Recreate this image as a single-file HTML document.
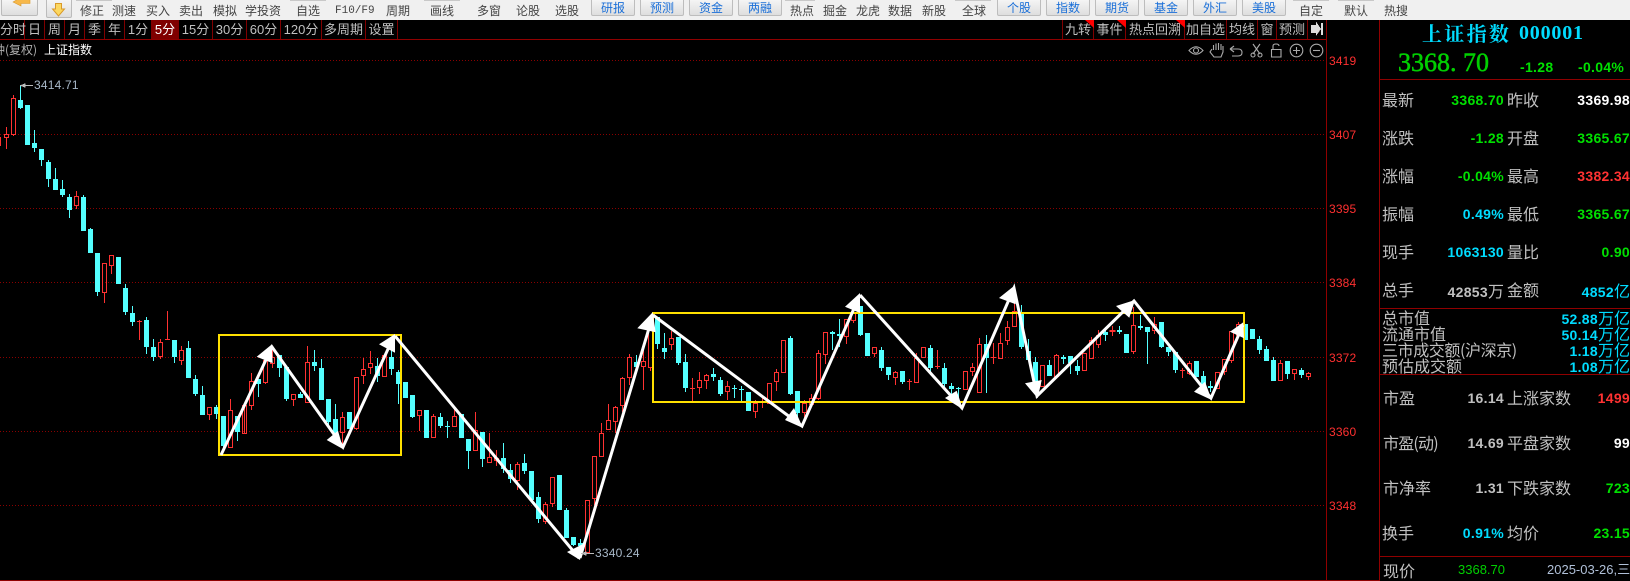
<!DOCTYPE html>
<html><head><meta charset="utf-8"><style>
html,body{margin:0;padding:0;background:#000}
#p{position:relative;width:1630px;height:581px;overflow:hidden;background:#000;font-family:"Liberation Sans","WenQuanYi Zen Hei","Noto Sans CJK SC",sans-serif}
#p div,#p span.a{position:absolute;white-space:nowrap}
.z{font-family:"WenQuanYi Zen Hei","Noto Sans CJK SC",sans-serif}
#tb{left:0;top:0;width:1630px;height:20px;background:#f0f0f0}
.t{top:4px;font-size:12px;line-height:14px;color:#444;font-family:"WenQuanYi Zen Hei","Noto Sans CJK SC",sans-serif}
.b{top:-2px;height:18px;box-sizing:border-box;border:1px solid #bdbdbd;border-radius:2px;background:linear-gradient(#f6f6f6,#dedede);color:#1a6fd8;font-size:12px;line-height:18px;text-align:center;font-family:"WenQuanYi Zen Hei","Noto Sans CJK SC",sans-serif}
.g{top:0;height:1px;background:#c8c8c8}
.tab{top:20px;height:19px;line-height:20px;box-sizing:border-box;border-right:1px solid #800000;color:#c0c0c0;font-size:13px;text-align:center;font-family:"Liberation Sans","WenQuanYi Zen Hei",sans-serif}
.ax{left:1329px;color:#ff3030;font-size:12px;line-height:14px;letter-spacing:.15px}
.l{font-size:16px;line-height:16px;color:#c0c0c0;font-family:"WenQuanYi Zen Hei","Noto Sans CJK SC",sans-serif}
.n{font-size:14px;font-weight:bold;line-height:16px;text-align:right;letter-spacing:.3px}
.u{font-size:16px;font-weight:normal;letter-spacing:0;font-family:"WenQuanYi Zen Hei","Noto Sans CJK SC",sans-serif}
.gr{color:#00e000}.re{color:#ff3232}.cy{color:#00dcff}.wh{color:#fff}.gy{color:#c0c0c0}
.c2{right:126px}.c4{right:0}
</style></head><body><div id="p">

<div id="tb"></div>
<div style="left:1px;top:-2px;width:37px;height:18px;box-sizing:border-box;border:1px solid #bbb;border-radius:2px;background:linear-gradient(#f6f6f6,#dedede)"></div>
<div style="left:46px;top:-2px;width:26px;height:20px;box-sizing:border-box;border:1px solid #bbb;border-radius:2px;background:linear-gradient(#f6f6f6,#dedede)"></div>
<svg style="position:absolute;left:0;top:0" width="80" height="20"><path d="M13 2L20 -2H30V3.500H21V6z" fill="#f7b84a" stroke="#d89a30" stroke-width=".6"/><path d="M55.500 3.500H61.500V9H64.500L58.500 16L52.500 9H55.500z" fill="#fcd860" stroke="#d99a2a" stroke-width="1"/></svg>
<div class="t" style="left:80px">修正</div>
<div class="t" style="left:112px">测速</div>
<div class="t" style="left:146px">买入</div>
<div class="t" style="left:179px">卖出</div>
<div class="t" style="left:213px">模拟</div>
<div class="t" style="left:245px">学投资</div>
<div class="t" style="left:296px">自选</div>
<div class="t" style="left:335px;font-family:'Liberation Mono',monospace;font-size:11px">F10/F9</div>
<div class="t" style="left:386px">周期</div>
<div class="t" style="left:430px">画线</div>
<div class="t" style="left:477px">多窗</div>
<div class="t" style="left:516px">论股</div>
<div class="t" style="left:555px">选股</div>
<div class="b" style="left:591px;width:44px">研报</div>
<div class="b" style="left:640px;width:44px">预测</div>
<div class="b" style="left:689px;width:44px">资金</div>
<div class="b" style="left:738px;width:44px">两融</div>
<div class="t" style="left:790px">热点</div>
<div class="t" style="left:823px">掘金</div>
<div class="t" style="left:856px">龙虎</div>
<div class="t" style="left:888px">数据</div>
<div class="t" style="left:922px">新股</div>
<div class="t" style="left:962px">全球</div>
<div class="b" style="left:997px;width:44px">个股</div>
<div class="b" style="left:1046px;width:44px">指数</div>
<div class="b" style="left:1095px;width:44px">期货</div>
<div class="b" style="left:1144px;width:44px">基金</div>
<div class="b" style="left:1193px;width:44px">外汇</div>
<div class="b" style="left:1242px;width:44px">美股</div>
<div class="t" style="left:1299px">自定</div>
<div class="t" style="left:1344px">默认</div>
<div class="t" style="left:1384px">热搜</div>
<div class="g" style="left:76px;width:36px"></div><div class="g" style="left:290px;width:36px"></div><div class="g" style="left:424px;width:36px"></div><div class="g" style="left:785px;width:30px"></div><div class="g" style="left:955px;width:36px"></div><div class="g" style="left:1293px;width:36px"></div><div class="g" style="left:1338px;width:36px"></div>

<div class="tab" style="left:0;width:25px;text-align:right;padding-right:1px">分时</div>
<div class="tab" style="left:25px;width:20px">日</div>
<div class="tab" style="left:45px;width:20px">周</div>
<div class="tab" style="left:65px;width:20px">月</div>
<div class="tab" style="left:85px;width:20px">季</div>
<div class="tab" style="left:105px;width:20px">年</div>
<div class="tab" style="left:125px;width:27px">1分</div>
<div class="tab" style="left:152px;width:27px;background:#800000;color:#fff">5分</div>
<div class="tab" style="left:179px;width:34px">15分</div>
<div class="tab" style="left:213px;width:34px">30分</div>
<div class="tab" style="left:247px;width:34px">60分</div>
<div class="tab" style="left:281px;width:41px">120分</div>
<div class="tab" style="left:322px;width:44px">多周期</div>
<div class="tab" style="left:366px;width:32px">设置</div>

<div class="tab" style="left:1062px;width:32px;border-left:1px solid #800000">九转</div>
<div class="tab" style="left:1094px;width:32px">事件</div>
<div class="tab" style="left:1126px;width:59px">热点回溯</div>
<div class="tab" style="left:1185px;width:42px">加自选</div>
<div class="tab" style="left:1227px;width:31px">均线</div>
<div class="tab" style="left:1258px;width:19px">窗</div>
<div class="tab" style="left:1277px;width:31px">预测</div>
<div class="z" style="left:-7px;top:43px;font-size:12px;line-height:14px;color:#b0b0b0">钟(复权)</div>
<div class="z" style="left:44px;top:43px;font-size:12px;line-height:14px;color:#fff">上证指数</div>

<svg style="position:absolute;left:0;top:0" width="1630" height="581" shape-rendering="crispEdges">
<path d="M0 39.500H1326M1379 79.500H1630M1379 308.500H1630M1379 374.500H1630M1379 556.500H1630M0 580.500H1379M1326.500 20V581M1379.500 20V581" stroke="#900000" fill="none"/>
<path d="M0 60.500H1326M0 134.500H1326M0 208.500H1326M0 282.500H1326M0 357.500H1326M0 431.500H1326M0 505.500H1326" stroke="#8a0000" stroke-dasharray="1 2" fill="none"/>
<path d="M1085 20h9v8zM1117 20h9v8zM1176 20h9v8z" fill="#f00" shape-rendering="auto"/>

<path fill="none" stroke="#54ffff" d="M20.500 85V109M27.500 105V145M34.500 130V152M41.500 149V166M48.500 160V187M55.500 168V190M62.500 180V197M69.500 194V218M83.500 195V231M90.500 228V253M97.500 253V296M118.500 257V284M125.500 284V315M132.500 306V326M146.500 317V354M153.500 339V361M174.500 340V363M188.500 341V378M195.500 375V396M202.500 386V415M216.500 405V419M223.500 416V450M237.500 416V441M258.500 379V397M279.500 355V377M286.500 367V401M300.500 392V398M314.500 350V371M321.500 359V400M328.500 399V427M335.500 404V440M349.500 412V429M377.500 358V382M391.500 350V375M398.500 370V404M405.500 382V398M412.500 395V418M426.500 410V438M440.500 413V428M447.500 421V438M461.500 414V438M468.500 439V469M482.500 432V467M503.500 443V473M510.500 464V483M524.500 454V474M531.500 471V500M538.500 492V523M559.500 475V510M566.500 508V538M573.500 537V546M580.500 539V553M636.500 355V367M657.500 317V349M664.500 333V359M678.500 337V365M685.500 354V392M713.500 368V381M720.500 377V396M734.500 385V398M741.500 386V402M748.500 392V411M790.500 336V395M797.500 391V420M832.500 331V350M839.500 319V347M860.500 306V336M867.500 333V356M881.500 347V371M888.500 367V380M902.500 371V384M930.500 345V372M944.500 363V387M951.500 383V395M958.500 387V402M986.500 335V393M1021.500 305V349M1028.500 339V360M1035.500 357V382M1049.500 360V376M1063.500 355V364M1070.500 356V374M1077.500 360V375M1105.500 327V341M1119.500 326V334M1126.500 334V353M1140.500 315V330M1147.500 327V364M1161.500 322V348M1168.500 347V356M1175.500 352V373M1196.500 361V377M1203.500 371V390M1210.500 381V392M1245.500 324V340M1252.500 329V339M1259.500 336V354M1266.500 346V361M1273.500 357V381M1287.500 361V379M1301.500 368V378"/>
<path fill="none" stroke="#54ffff" stroke-width="5" d="M20.500 100V108M27.500 105V145M34.500 143V148M41.500 149V160M48.500 162V179M55.500 179V190M62.500 189V195M69.500 197V210M83.500 197V231M90.500 229V253M97.500 253V292M118.500 257V284M125.500 288V312M132.500 313V322M146.500 320V347M153.500 347V357M174.500 340V357M188.500 348V378M195.500 379V394M202.500 395V415M216.500 407V414M223.500 416V446M237.500 416V432M258.500 379V384M279.500 355V368M286.500 367V399M300.500 394V398M314.500 362V366M321.500 368V400M328.500 399V422M335.500 419V435M349.500 412V429M377.500 366V376M391.500 357V369M398.500 372V384M405.500 382V398M412.500 395V417M426.500 410V438M440.500 417V426M447.500 426V427M461.500 414V438M468.500 439V451M482.500 432V459M503.500 458V469M510.500 470V479M524.500 463V471M531.500 471V500M538.500 497V519M559.500 475V510M566.500 510V538M573.500 537V545M580.500 543V546M636.500 362V367M657.500 317V344M664.500 348V352M678.500 337V363M685.500 362V388M713.500 374V377M720.500 380V394M734.500 388V389M741.500 389V390M748.500 392V411M790.500 338V394M797.500 391V413M832.500 332V334M839.500 334V336M860.500 306V335M867.500 333V356M881.500 350V368M888.500 367V375M902.500 371V382M930.500 348V368M944.500 368V384M951.500 386V389M958.500 388V389M986.500 344V358M1021.500 312V347M1028.500 351V360M1035.500 362V382M1049.500 365V376M1063.500 357V359M1070.500 356V363M1077.500 366V371M1105.500 332V335M1119.500 330V332M1126.500 334V353M1140.500 326V328M1147.500 327V332M1161.500 322V347M1168.500 347V352M1175.500 352V370M1196.500 361V377M1203.500 376V386M1210.500 386V388M1245.500 324V340M1252.500 329V339M1259.500 339V350M1266.500 349V361M1273.500 360V381M1287.500 361V374M1301.500 370V375"/>
<path fill="none" stroke="#ff3232" d="M-3.500 137.500h4v8h-4zM6.500 127V134M6.500 138V149M4.500 134.500h4v3h-4zM13.500 95V98M13.500 135V136M11.500 98.500h4v36h-4zM76.500 191V196M76.500 205V209M74.500 196.500h4v9h-4zM104.500 292V303M102.500 263.500h4v29h-4zM111.500 265V274M109.500 255.500h4v10h-4zM139.500 320V340M137 321.500h5M160.500 339V342M160.500 356V359M158.500 342.500h4v14h-4zM167.500 311V339M165 339.500h5M181.500 346V350M181.500 360V365M179.500 350.500h4v10h-4zM209.500 414V420M207.500 407.500h4v7h-4zM230.500 399V410M230.500 447V448M228.500 410.500h4v37h-4zM244.500 407V433M242.500 405.500h4v28h-4zM251.500 373V381M251.500 405V410M249.500 381.500h4v24h-4zM265.500 382V384M263.500 360.500h4v22h-4zM272.500 347V357M272.500 363V368M270.500 357.500h4v6h-4zM293.500 399V406M291.500 394.500h4v5h-4zM307.500 346V362M307.500 402V403M305.500 362.500h4v40h-4zM342.500 412V417M342.500 432V445M340.500 417.500h4v15h-4zM356.500 428V430M354.500 377.500h4v51h-4zM363.500 358V369M363.500 375V384M361.500 369.500h4v6h-4zM370.500 351V363M370.500 367V374M368.500 363.500h4v4h-4zM384.500 376V377M382.500 355.500h4v21h-4zM419.500 415V431M417.500 410.500h4v5h-4zM433.500 414V416M433.500 437V438M431.500 416.500h4v21h-4zM454.500 409V416M452.500 416.500h4v10h-4zM475.500 412V430M475.500 450V451M473.500 430.500h4v20h-4zM489.500 433V457M487.500 457.500h4v5h-4zM496.500 450V458M496.500 460V466M494.500 458.500h4v2h-4zM517.500 462V464M517.500 480V490M515.500 464.500h4v16h-4zM545.500 502V504M545.500 521V524M543.500 504.500h4v17h-4zM552.500 503V507M550.500 477.500h4v26h-4zM585.500 500.500h4v52h-4zM594.500 498V505M592.500 456.500h4v42h-4zM601.500 423V433M599.500 433.500h4v23h-4zM608.500 404V420M606.500 420.500h4v9h-4zM615.500 406V407M615.500 421V433M613.500 407.500h4v14h-4zM622.500 377V378M622.500 405V412M620.500 378.500h4v27h-4zM629.500 354V357M629.500 377V385M627.500 357.500h4v20h-4zM643.500 349V361M643.500 366V390M641.500 361.500h4v5h-4zM650.500 367V371M648.500 330.500h4v37h-4zM671.500 331V338M671.500 344V350M669.500 338.500h4v6h-4zM692.500 378V401M690 388.500h5M699.500 372V380M699.500 387V394M697.500 380.500h4v7h-4zM706.500 374V375M706.500 380V389M704.500 375.500h4v5h-4zM727.500 381V386M727.500 391V400M725.500 386.500h4v5h-4zM755.500 400V403M755.500 411V418M753.500 403.500h4v8h-4zM762.500 395V408M760 402.500h5M767.500 383.500h4v20h-4zM776.500 369V372M776.500 381V391M774.500 372.500h4v9h-4zM781.500 340.500h4v32h-4zM804.500 400V403M804.500 412V420M802.500 403.500h4v9h-4zM811.500 394V398M809.500 398.500h4v6h-4zM818.500 350V353M818.500 398V400M816.500 353.500h4v45h-4zM825.500 354V364M823.500 332.500h4v22h-4zM846.500 336V344M844.500 319.500h4v17h-4zM853.500 310V313M853.500 320V323M851.500 313.500h4v7h-4zM874.500 353V357M872.500 347.500h4v6h-4zM895.500 371V372M895.500 377V385M893.500 372.500h4v5h-4zM909.500 379V390M907 381.500h5M916.500 353V358M916.500 382V383M914.500 358.500h4v24h-4zM921.500 347.500h4v10h-4zM937.500 350V369M935 366.500h5M965.500 389V390M963.500 371.500h4v18h-4zM972.500 363V367M972.500 371V376M970.500 367.500h4v4h-4zM979.500 338V344M979.500 392V393M977.500 344.500h4v48h-4zM993.500 343V364M991 357.500h5M1000.500 333V343M998.500 343.500h4v15h-4zM1007.500 321V327M1007.500 340V345M1005.500 327.500h4v13h-4zM1014.500 297V311M1012.500 311.500h4v15h-4zM1040.500 365.500h4v21h-4zM1056.500 354V355M1056.500 376V377M1054.500 355.500h4v21h-4zM1084.500 370V371M1082.500 353.500h4v17h-4zM1091.500 337V340M1089.500 340.500h4v18h-4zM1098.500 330V335M1098.500 344V348M1096.500 335.500h4v9h-4zM1112.500 326V336M1110 330.500h5v1h-5zM1133.500 307V325M1133.500 351V354M1131.500 325.500h4v26h-4zM1154.500 317V324M1154.500 330V334M1152.500 324.500h4v6h-4zM1182.500 368V378M1180 370.500h5M1189.500 361V363M1189.500 373V375M1187.500 363.500h4v10h-4zM1215.500 372.500h4v16h-4zM1224.500 371V375M1222.500 359.500h4v12h-4zM1231.500 360V363M1229.500 331.500h4v29h-4zM1238.500 322V324M1238.500 335V336M1236.500 324.500h4v11h-4zM1280.500 360V363M1278.500 363.500h4v17h-4zM1294.500 373V380M1292.500 369.500h4v4h-4zM1308.500 372V373M1308.500 376V380M1306.500 373.500h4v3h-4z"/>
<path fill="none" stroke="#ffe000" stroke-width="2" d="M219 335H401V455H219zM653 313H1244V402H653z"/>
<g shape-rendering="auto">
<path fill="none" stroke="#fff" stroke-width="3" d="M221 455L272 347L343 447L394 336M395 336L579 558M580 558L653 315M653 315L802 426L860 295M860 295L962 408L1014 288L1037 396L1134 301L1211 398L1243 325"/>
<path fill="#fff" d="M271.700 344.500L256.700 356.700L272.700 363.300zM343.300 449.300L326.700 440L338 430.700zM395 334L379 344.300L395 352.700zM580 560L567 552L583 544zM652.700 312.300L637.300 328.300L655.700 332.300zM803 428L785 420L794 408zM860 293L845 306.700L860 313zM963 409.500L945 398L956.700 390.700zM1014.300 285.700L999 298L1015.700 304.300zM1037.700 398.300L1025 383.300L1041.700 380zM1135 300L1116 306L1129.300 317.700zM1211.700 400L1194 391.700L1205 381.700zM1243.300 322.300L1230 331.700L1244 338.300z"/>
</g>
<path d="M21 85.500H33M21 85.500l4-1.500v3z" stroke="#bbb" fill="#bbb"/>
<path d="M20.500 86V100" stroke="#54ffff"/>
<path d="M582 553.500H594M582 553.500l4-1.500v3z" stroke="#bbb" fill="#bbb"/>
<g shape-rendering="auto" fill="none" stroke="#aaa" stroke-width="1.100">
<path d="M1189 50.500Q1196 43 1203 50.500Q1196 58 1189 50.500z"/><circle cx="1196" cy="50.500" r="2.500"/>
<path d="M1212 49L1210 52L1214 57H1221L1223 52V46M1221 50V44M1218.500 50V43M1216 50V43.500M1213.500 50V45"/>
<path d="M1230 49H1238Q1242 49 1242 52.500Q1242 56 1238 56H1232M1230 49L1234 46M1230 49L1234 52"/>
<path d="M1253 44L1260 54M1260 44L1253 54"/><circle cx="1253" cy="55" r="2"/><circle cx="1260" cy="55" r="2"/>
<path d="M1271.500 49.500H1281V57H1271.500zM1273 49.500V46Q1273 44 1276 44Q1279 44 1279 46"/>
<circle cx="1296.500" cy="50.500" r="6.300"/><path d="M1293 50.500H1300M1296.500 47V54"/>
<circle cx="1316.500" cy="50.500" r="6.300"/><path d="M1313 50.500H1320"/>
</g>
<path d="M1311 25H1316V21.500L1321 29L1316 36V33H1311z" fill="#ddd"/><path d="M1321 23H1323V35H1321z" fill="#ddd"/>
</svg>

<div style="left:34px;top:78px;font-size:12px;line-height:14px;letter-spacing:.2px;color:#a8b8c8">3414.71</div>
<div style="left:595px;top:546px;font-size:12px;line-height:14px;letter-spacing:.2px;color:#a8b8c8">3340.24</div>

<div class="ax" style="top:54px">3419</div>
<div class="ax" style="top:128px">3407</div>
<div class="ax" style="top:202px">3395</div>
<div class="ax" style="top:276px">3384</div>
<div class="ax" style="top:351px">3372</div>
<div class="ax" style="top:425px">3360</div>
<div class="ax" style="top:499px">3348</div>

<div class="cy" style="left:1422px;top:22px;font-size:20px;line-height:22px;font-weight:bold;letter-spacing:2.300px;font-family:'Noto Serif CJK SC',serif;color:#00dcff">上证指数</div>
<div class="cy" style="left:1519px;top:22px;font-size:20px;line-height:22px;font-weight:bold;letter-spacing:.8px;font-family:'Liberation Serif',serif">000001</div>
<div style="left:1398px;top:48px;font-size:26px;line-height:30px;color:#00d000;-webkit-text-stroke:.5px #00d000;font-family:'Liberation Serif',serif">3368. 70</div>
<div class="n gr" style="left:1520px;top:59px">-1.28</div>
<div class="n gr" style="left:1578px;top:59px">-0.04%</div>

<div class="l" style="left:1382px;top:91px">最新</div><div class="n gr c2" style="top:92px">3368.70</div><div class="l" style="left:1507px;top:91px">昨收</div><div class="n wh c4" style="top:92px">3369.98</div>
<div class="l" style="left:1382px;top:129px">涨跌</div><div class="n gr c2" style="top:130px">-1.28</div><div class="l" style="left:1507px;top:129px">开盘</div><div class="n gr c4" style="top:130px">3365.67</div>
<div class="l" style="left:1382px;top:167px">涨幅</div><div class="n gr c2" style="top:168px">-0.04%</div><div class="l" style="left:1507px;top:167px">最高</div><div class="n re c4" style="top:168px">3382.34</div>
<div class="l" style="left:1382px;top:205px">振幅</div><div class="n cy c2" style="top:206px">0.49%</div><div class="l" style="left:1507px;top:205px">最低</div><div class="n gr c4" style="top:206px">3365.67</div>
<div class="l" style="left:1382px;top:243px">现手</div><div class="n cy c2" style="top:244px">1063130</div><div class="l" style="left:1507px;top:243px">量比</div><div class="n gr c4" style="top:244px">0.90</div>
<div class="l" style="left:1382px;top:281px">总手</div><div class="n gy c2" style="top:282px">42853<span class="u">万</span></div><div class="l" style="left:1507px;top:281px">金额</div><div class="n cy c4" style="top:282px">4852<span class="u">亿</span></div>

<div class="l" style="left:1382px;top:309px">总市值</div><div class="n cy c4" style="top:309px">52.88<span class="u">万亿</span></div>
<div class="l" style="left:1382px;top:325px">流通市值</div><div class="n cy c4" style="top:325px">50.14<span class="u">万亿</span></div>
<div class="l" style="left:1382px;top:341px;letter-spacing:-.4px">三市成交额(沪深京)</div><div class="n cy c4" style="top:341px">1.18<span class="u">万亿</span></div>
<div class="l" style="left:1382px;top:357px">预估成交额</div><div class="n cy c4" style="top:357px">1.08<span class="u">万亿</span></div>

<div class="l" style="left:1383px;top:389px">市盈</div><div class="n gy c2" style="top:390px">16.14</div><div class="l" style="left:1507px;top:389px">上涨家数</div><div class="n re c4" style="top:390px">1499</div>
<div class="l" style="left:1383px;top:434px;letter-spacing:-.8px">市盈(动)</div><div class="n gy c2" style="top:435px">14.69</div><div class="l" style="left:1507px;top:434px">平盘家数</div><div class="n wh c4" style="top:435px">99</div>
<div class="l" style="left:1383px;top:479px">市净率</div><div class="n gy c2" style="top:480px">1.31</div><div class="l" style="left:1507px;top:479px">下跌家数</div><div class="n gr c4" style="top:480px">723</div>
<div class="l" style="left:1382px;top:524px">换手</div><div class="n cy c2" style="top:525px">0.91%</div><div class="l" style="left:1507px;top:524px">均价</div><div class="n gr c4" style="top:525px">23.15</div>

<div class="l" style="left:1383px;top:562px">现价</div>
<div style="left:1458px;top:562px;font-size:13px;line-height:16px;color:#00d000">3368.70</div>
<div style="left:1547px;top:562px;font-size:13px;line-height:16px;color:#b0c0d8">2025-03-26,三</div>
</div></body></html>
